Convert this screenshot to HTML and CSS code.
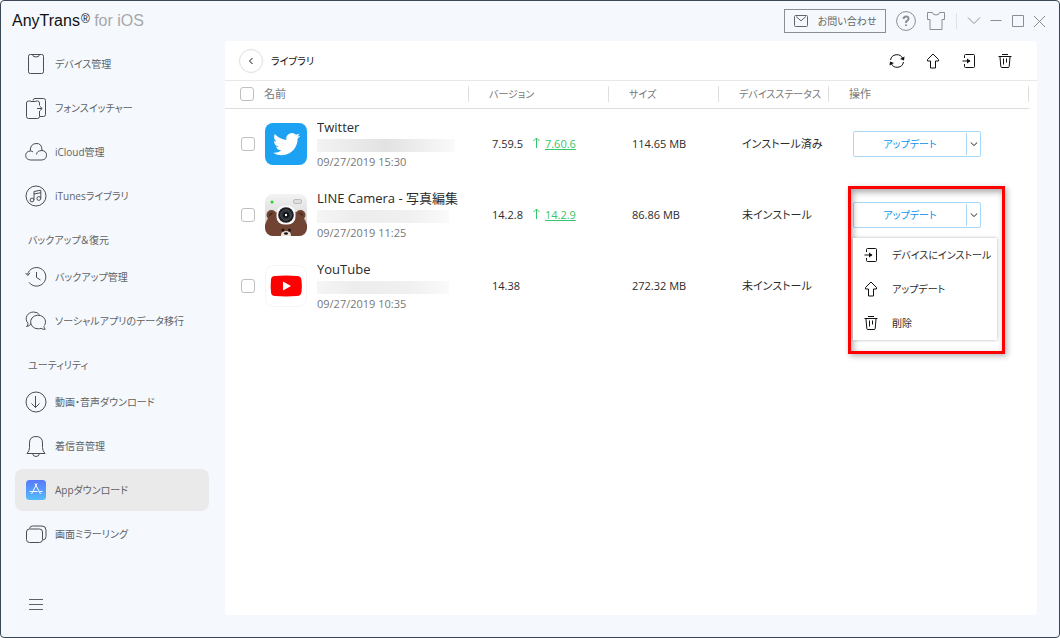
FILE: index.html
```html
<!DOCTYPE html>
<html lang="ja">
<head>
<meta charset="utf-8">
<title>AnyTrans for iOS</title>
<link rel="stylesheet" href="styles.css">
</head>
<body>
<svg class="sprite" aria-hidden="true">
  <symbol id="i-up" viewBox="0 0 16 16"><path d="M8 1 2.500 6.500V8H5.500v7h5V8h3V6.500z"/></symbol>
  <symbol id="i-install" viewBox="0 0 16 16"><path d="M3.500 5V2.500q0-1 1-1h8q1 0 1 1v11q0 1-1 1h-8q-1 0-1-1V11"/><path d="M1.500 8H9"/><path d="M6 5.500 9.500 8 6 10.500z" fill="currentColor" stroke="none"/></symbol>
  <symbol id="i-trash" viewBox="0 0 16 16"><path d="M1.500 3.500h13M5 1.500h6M3 4l.8 9.500q.1 1 1.200 1h6q1.100 0 1.200-1L13 4M6.500 5.500v6M9.500 5.500v4"/></symbol>
  <symbol id="i-caret" viewBox="0 0 8 8"><path d="m.8 2.500 3.200 3 3.200-3"/></symbol>
</svg>
<div class="window">
  <header class="titlebar">
    <h1 class="brand">AnyTrans<sup>®</sup> <span>for iOS</span></h1>
    <button class="contact"><svg width="14" height="12" viewBox="0 0 14 12"><rect x=".5" y=".5" width="13" height="11" rx="1"/><path d="m2 1.500 5 4.300 5-4.300"/></svg>お問い合わせ</button>
    <button class="icon-btn" aria-label="ヘルプ"><svg width="20" height="20" viewBox="0 0 20 20"><circle cx="10" cy="10" r="9.400"/><path class="bold" d="M7.600 8q0-2.500 2.500-2.500T12.500 7.700q0 1.200-1.300 2T10 12M10 13.500v1.500"/></svg></button>
    <button class="icon-btn" aria-label="スキン"><svg width="20" height="20" viewBox="0 0 20 20"><path d="M1.500 1.500h5q.5 2.500 3.500 2.500t3.500-2.500h5v7h-2.500v10H4v-10H1.500z"/></svg></button>
    <span class="divider"></span>
    <div class="window-buttons">
      <button class="icon-btn" aria-label="メニュー"><svg width="14" height="14" viewBox="0 0 14 14"><path d="m1 3.500 6 6 6-6"/></svg></button>
      <button class="icon-btn" aria-label="最小化"><svg width="14" height="14" viewBox="0 0 14 14"><path d="M1.500 6.500h11"/></svg></button>
      <button class="icon-btn" aria-label="最大化"><svg width="14" height="14" viewBox="0 0 14 14"><path d="M1.500 1.500h11v11h-11z"/></svg></button>
      <button class="icon-btn" aria-label="閉じる"><svg width="14" height="14" viewBox="0 0 14 14"><path d="m1 2 11 11M12 2 1 13"/></svg></button>
    </div>
  </header>
  <div class="body">
    <nav class="sidebar">
      <a class="nav-item" href="#"><svg width="22" height="22" viewBox="0 0 22 22"><rect x="3.500" y="1.500" width="15" height="19" rx="1.800"/><path d="M7.500 1.500q0 2.500 3.500 2.500t3.500-2.500"/></svg>デバイス管理</a>
      <a class="nav-item" href="#"><svg width="22" height="22" viewBox="0 0 22 22"><path d="M14.500 8.500V6q0-2-2-2h-1.500l-1 .5h-4L5 4H3.500q-2 0-2 2v13.500q0 2 2 2h9q2 0 2-2V14M8 3.500q0-2 2-2h8.500q2 0 2 2v14q0 2-2 2h-3.500M12 11.500h5M14.800 9.300l2.400 2.200-2.400 2.200"/></svg>フォンスイッチャー</a>
      <a class="nav-item" href="#"><svg width="22" height="22" viewBox="0 0 22 22"><path d="M9 19H5.500Q.7 18.500.7 14.500T5.300 10Q5 3 11 2.500T17 9.500q4.500.5 4.500 4.700T17 19H9M11.500 13.500Q12 9.500 17 9.500M5.300 10q1.800 0 2.700 1"/></svg>iCloud管理</a>
      <a class="nav-item" href="#"><svg width="22" height="22" viewBox="0 0 22 22"><circle cx="11" cy="11" r="10"/><circle cx="7" cy="15" r="1.900"/><circle cx="13.800" cy="13.500" r="1.900"/><path d="M9 15V6.500l6.800-1.300v8.300M9 9l6.800-1.300"/></svg>iTunesライブラリ</a>
      <h2 class="nav-title">バックアップ＆復元</h2>
      <a class="nav-item" href="#"><svg width="22" height="22" viewBox="0 0 22 22"><path d="M2.500 8.500A9.300 9.300 0 1 1 4 16.300M.5 7l2.300 2.500L5 6.800M11.500 6v5.500l4 2.500"/></svg>バックアップ管理</a>
      <a class="nav-item" href="#"><svg width="22" height="22" viewBox="0 0 22 22"><path d="M19.500 15.500A7.500 6.800 0 1 0 13 18.800q1.500 0 3-.5 2 1.500 4.300.9-1.400-1-1.400-3M6 13.500Q5 16.200 1.500 16.500 3 15.500 3 13.300C-1.500 8 3 2 8.500 2q4.200 0 6 2.800"/></svg>ソーシャルアプリのデータ移行</a>
      <h2 class="nav-title">ユーティリティ</h2>
      <a class="nav-item" href="#"><svg width="22" height="22" viewBox="0 0 22 22"><circle cx="11" cy="11" r="10"/><path d="M10.500 5v11.500M6.500 12.500l4 4 4-4"/></svg>動画・音声ダウンロード</a>
      <a class="nav-item" href="#"><svg width="22" height="22" viewBox="0 0 22 22"><path d="M2 18.500q2.500-2.500 2.500-6V8q0-6.500 6.500-6.500T17.500 8v4.500q0 3.500 2.500 6zM7.500 18.500q.5 3 3.500 3t3.500-3"/></svg>着信音管理</a>
      <a class="nav-item active" href="#" aria-current="page"><svg width="22" height="22" viewBox="0 0 22 22"><defs><linearGradient id="store" x2="0" y2="1"><stop stop-color="#5878fb"/><stop offset="1" stop-color="#55bdfb"/></linearGradient></defs><rect x="1" y="1" width="20" height="20" rx="3.500" fill="url(#store)" stroke="none"/><path stroke="#fff" d="M10 4.500l5.500 10.500M12 4.500 6.500 15M4.500 12.500h8M14.500 12.500h3"/></svg>Appダウンロード</a>
      <a class="nav-item" href="#"><svg width="22" height="22" viewBox="0 0 22 22"><rect x="1.500" y="6" width="16" height="13.500" rx="3"/><path d="M4.500 5.500q.5-2.500 3-2.500H17q4 0 4 4v6.500q0 3-3 3.500"/></svg>画面ミラーリング</a>
      <button class="collapse" aria-label="メニューを折りたたむ"><svg width="14" height="14" viewBox="0 0 14 14"><path d="M0 2.500h14M0 7.500h14M0 12.500h14"/></svg></button>
    </nav>
    <main class="panel">
      <div class="toolbar">
        <button class="back" aria-label="戻る"><svg width="8" height="8" viewBox="0 0 8 8"><path d="M5.500 1 2.500 4l3 3"/></svg></button>
        <h2 class="panel-title">ライブラリ</h2>
        <button class="tool" aria-label="更新"><svg width="16" height="16" viewBox="0 0 16 16"><path d="M1.500 7A6.500 6.500 0 0 1 13.800 5.500M14.500 9A6.500 6.500 0 0 1 2.200 10.500"/><path fill="currentColor" stroke="none" d="M15.500 3.500 15 7.500 11 6zM.5 12.500 1 8.500 5 10z"/></svg></button>
        <button class="tool" aria-label="アップロード"><svg width="16" height="16"><use href="#i-up"/></svg></button>
        <button class="tool" aria-label="インストール"><svg width="16" height="16"><use href="#i-install"/></svg></button>
        <button class="tool" aria-label="削除"><svg width="16" height="16"><use href="#i-trash"/></svg></button>
      </div>
      <table class="apps">
        <colgroup><col class="c-check"><col class="c-name"><col class="c-version"><col class="c-size"><col class="c-status"><col></colgroup>
        <thead>
          <tr>
            <th><input type="checkbox" aria-label="すべて選択"></th>
            <th class="h-name"><div>名前</div></th>
            <th><div>バージョン</div></th>
            <th><div>サイズ</div></th>
            <th><div>デバイスステータス</div></th>
            <th class="h-action"><div>操作</div></th>
          </tr>
        </thead>
        <tbody>
          <tr>
            <td><input type="checkbox" aria-label="Twitter"></td>
            <td class="name-cell"><div class="app">
              <svg width="42" height="42" viewBox="0 0 42 42"><rect width="42" height="42" rx="8" fill="#1da1f2"/><path fill="#fff" transform="translate(8 7.500) scale(1.140)" d="M23.953 4.570a10 10 0 01-2.825.775 4.958 4.958 0 002.163-2.723c-.951.555-2.005.959-3.127 1.184a4.920 4.920 0 00-8.384 4.482C7.690 8.095 4.067 6.130 1.640 3.162a4.822 4.822 0 00-.666 2.475c0 1.710.870 3.213 2.188 4.096a4.904 4.904 0 01-2.228-.616v.060a4.923 4.923 0 003.946 4.827 4.996 4.996 0 01-2.212.085 4.936 4.936 0 004.604 3.417 9.867 9.867 0 01-6.102 2.105c-.390 0-.779-.023-1.170-.067a13.995 13.995 0 007.557 2.209c9.053 0 13.998-7.496 13.998-13.985 0-.210 0-.420-.015-.630A9.935 9.935 0 0024 4.590z"/></svg>
              <div class="app-text"><span class="app-name">Twitter</span><span class="mask long"></span><time>09/27/2019 15:30</time></div>
            </div></td>
            <td>7.59.5<span class="arrow"><svg width="7" height="11" viewBox="0 0 7 11"><path d="M3.500 11V1M.5 4l3-3 3 3"/></svg></span><a class="update" href="#">7.60.6</a></td>
            <td>114.65 MB</td>
            <td class="status">インストール済み</td>
            <td class="actions"><div class="split"><button class="main">アップデート</button><button class="more" aria-label="その他の操作"><svg width="8" height="8"><use href="#i-caret"/></svg></button></div></td>
          </tr>
          <tr>
            <td><input type="checkbox" aria-label="LINE Camera"></td>
            <td class="name-cell"><div class="app">
              <svg width="42" height="42" viewBox="0 0 42 42"><defs><clipPath id="round"><rect width="42" height="42" rx="8"/></clipPath><linearGradient id="silver" x2="0" y2="1"><stop stop-color="#f3f3f3"/><stop offset="1" stop-color="#c9c9c9"/></linearGradient></defs><g clip-path="url(#round)"><rect width="42" height="42" fill="url(#silver)"/><circle cx="6.500" cy="21" r="5" fill="#704332"/><circle cx="35.500" cy="21" r="5" fill="#704332"/><circle cx="7" cy="21.500" r="3" fill="#4f2c22"/><circle cx="35" cy="21.500" r="3" fill="#4f2c22"/><path fill="#704332" d="M0 42V31Q3 20 13 17.500h16Q39 20 42 31v11z"/><ellipse cx="21" cy="41" rx="5" ry="4" fill="#eee5dd"/><circle cx="18" cy="36" r="1.500" fill="#1b1311"/><circle cx="24.500" cy="36" r="1.500" fill="#1b1311"/><ellipse cx="21" cy="39.500" rx="2" ry="1.300" fill="#1b1311"/><rect x="11.500" y="11.500" width="19" height="19" rx="7.500" fill="#f8f8f8"/><circle cx="21" cy="21" r="7.800" fill="#1c1c1e"/><circle cx="21" cy="21" r="5.300" fill="#2c3138" stroke="#4b4f54"/><circle cx="21" cy="21" r="2.800" fill="#07080a"/><circle cx="21" cy="21" r="1.200" fill="#fff"/><circle cx="7" cy="8" r="1.500" fill="#23d329"/><rect x="28.500" y="5.500" width="8" height="4" rx="1.500" fill="#dedede" stroke="#bcbcbc"/></g></svg>
              <div class="app-text"><span class="app-name">LINE Camera - 写真編集</span><span class="mask"></span><time>09/27/2019 11:25</time></div>
            </div></td>
            <td>14.2.8<span class="arrow"><svg width="7" height="11" viewBox="0 0 7 11"><path d="M3.500 11V1M.5 4l3-3 3 3"/></svg></span><a class="update" href="#">14.2.9</a></td>
            <td>86.86 MB</td>
            <td class="status">未インストール</td>
            <td class="actions"><div class="split"><button class="main">アップデート</button><button class="more" aria-label="その他の操作" aria-expanded="true"><svg width="8" height="8"><use href="#i-caret"/></svg></button>
              <div class="highlight"></div>
              <div class="menu">
                <button><svg width="16" height="16"><use href="#i-install"/></svg>デバイスにインストール</button>
                <button><svg width="16" height="16"><use href="#i-up"/></svg>アップデート</button>
                <button><svg width="16" height="16"><use href="#i-trash"/></svg>削除</button>
              </div>
            </div></td>
          </tr>
          <tr>
            <td><input type="checkbox" aria-label="YouTube"></td>
            <td class="name-cell"><div class="app">
              <svg width="42" height="42" viewBox="0 0 42 42"><rect x=".5" y=".5" width="41" height="41" rx="8" fill="#fff" stroke="#f5f5f5"/><path d="M6 15q0-4 4-4 11-.8 22 0 4 0 4.500 4 .8 6 0 12-.5 4-4.500 4-11 .8-22 0-4 0-4-4-.7-6 0-12z" fill="#fe0000"/><path d="m18 16.500 8 4.500-8 4.500z" fill="#fff"/></svg>
              <div class="app-text"><span class="app-name">YouTube</span><span class="mask"></span><time>09/27/2019 10:35</time></div>
            </div></td>
            <td>14.38</td>
            <td>272.32 MB</td>
            <td class="status">未インストール</td>
            <td class="actions"></td>
          </tr>
        </tbody>
      </table>
    </main>
  </div>
</div>
</body>
</html>
```
FILE: styles.css
```css
* { box-sizing: border-box; }

body {
  margin: 0;
  font-family: "Open Sans", "Noto Sans CJK JP", sans-serif;
  font-size: 10px;
  line-height: 16px;
  font-feature-settings: "palt";
  color: #2b2b2b;
}

button {
  margin: 0;
  padding: 0;
  border: 0;
  background: none;
  font: inherit;
  font-feature-settings: inherit;
  color: inherit;
  cursor: pointer;
}

svg {
  display: block;
  flex: none;
  fill: none;
  stroke: currentColor;
}

.app > svg { stroke: none; }
.sprite { position: absolute; width: 0; height: 0; }

.window {
  display: flex;
  flex-direction: column;
  min-height: 100vh;
  border: 1px solid #3b4756;
  border-radius: 4px;
  background: #f5f9fd;
}

.titlebar {
  display: flex;
  align-items: center;
  gap: 10px;
  height: 40px;
  padding: 0 12px 0 11px;
  color: #8a8f94;
}

.brand {
  flex: 1;
  margin: 0;
  font-family: "Liberation Sans", sans-serif;
  font-size: 16px;
  font-weight: 400;
  line-height: 20px;
  color: #111;
}

.brand sup { margin: 0 0 0 1px; font-size: 12px; line-height: 1; vertical-align: 3px; }
.brand span { color: #a5a8ab; }

.contact {
  display: flex;
  align-items: center;
  justify-content: center;
  gap: 10px;
  width: 102px;
  height: 24px;
  border: 1px solid #8a8f94;
  color: #666;
}

.bold { stroke-width: 2; }
.divider { width: 1px; height: 16px; background: #dfe3e6; }
.window-buttons { display: flex; gap: 8px; }

.body { display: flex; flex: 1; }

.sidebar {
  display: flex;
  flex-direction: column;
  flex: none;
  width: 224px;
  padding: 1px 16px 26px 14px;
  color: #5f6265;
}

.nav-item {
  display: flex;
  align-items: center;
  gap: 8px;
  height: 42px;
  margin: 1px 0;
  padding-left: 10px;
  border-radius: 8px;
  color: inherit;
  text-decoration: none;
}

.nav-item svg { color: #4b4f53; }
.nav-item.active { background: #eaeaea; }

.nav-title {
  height: 37px;
  margin: 0;
  padding: 14px 0 0 13px;
  font-size: 10px;
  font-weight: 400;
}

.collapse { margin: auto 0 0 14px; width: 14px; }

.panel {
  flex: 1;
  margin: 0 22px 22px 0;
  border-radius: 4px;
  background: #fff;
}

.toolbar {
  display: flex;
  align-items: center;
  gap: 20px;
  height: 40px;
  padding: 0 24px 0 14px;
  border-bottom: 1px solid #e8e8e8;
  color: #111;
}

.back {
  display: grid;
  place-items: center;
  width: 24px;
  height: 24px;
  border: 1px solid #dedede;
  border-radius: 50%;
}

.panel-title {
  flex: 1;
  margin: 0 0 0 -12px;
  font-size: 10px;
  font-weight: 400;
}

.apps {
  width: calc(100% - 8px);
  table-layout: fixed;
  border-collapse: collapse;
}

.c-check { width: 39px; }
.c-name { width: 205px; }
.c-version { width: 140px; }
.c-size, .c-status { width: 110px; }

.apps th {
  height: 27px;
  padding: 0;
  border-bottom: 1px solid #dedede;
  font-weight: 400;
  text-align: left;
  color: #777;
}

.apps th div {
  padding-left: 20px;
  border-right: 1px solid #dedede;
  white-space: nowrap;
}

.apps th.h-name, .apps th.h-action { font-size: 11px; }
.apps th.h-name div { padding-left: 0; }
.apps th input { margin-left: 15px; }

.apps td {
  height: 71px;
  padding: 0 0 0 23px;
  font-size: 11px;
  white-space: nowrap;
}

.apps td:first-child { padding-left: 16px; }
.apps .name-cell { padding: 0 6px 0 1px; }
.apps .actions { padding-left: 24px; font-size: 10px; }

input[type="checkbox"] {
  display: block;
  appearance: none;
  width: 14px;
  height: 14px;
  margin: 0;
  border: 1px solid #bfbfbf;
  border-radius: 3px;
  background: #fff;
}

.app { display: flex; align-items: center; gap: 10px; }
.app-text { flex: 1; min-width: 0; }

.app-name {
  display: block;
  overflow: hidden;
  font-size: 13px;
  line-height: 20px;
}

.mask {
  display: block;
  width: 132px;
  height: 13px;
  margin: 2px 0;
  background: linear-gradient(90deg, #f5f5f5, #ededed 30%, #f0f0f0 70%, #fafafa);
}

.mask.long {
  width: 138px;
  background: linear-gradient(90deg, #f3f3f3, #e2e2e2 50%, #fafafa);
}

time { display: block; font-size: 11px; color: #777; }

.arrow { display: inline-block; margin: 0 5px 0 10px; color: #38c46c; }
.update { color: #38c46c; text-decoration: underline; }

.split {
  position: relative;
  display: flex;
  width: 128px;
  height: 26px;
  border: 1px solid #a8d8f8;
  border-radius: 2px;
}

.split .main { flex: 1; color: #0a93ea; }

.split .more {
  display: grid;
  place-items: center;
  width: 14px;
  margin: 1px 0;
  border-left: 1px solid #a8d8f8;
}

.highlight {
  position: absolute;
  left: -6px;
  top: -17px;
  width: 157px;
  height: 168px;
  border: 3px solid #f00;
  box-shadow: 2px 2px 6px rgba(0, 0, 0, .3), inset 2px 3px 6px rgba(0, 0, 0, .35);
  pointer-events: none;
}

.menu {
  position: absolute;
  left: -1px;
  top: 35px;
  width: 144px;
  background: #fff;
  box-shadow: 0 0 3px rgba(0, 0, 0, .3);
}

.menu button {
  display: flex;
  align-items: center;
  gap: 13px;
  width: 100%;
  height: 34px;
  padding-left: 10px;
  white-space: nowrap;
}
.menu svg { color: #111; }
```
